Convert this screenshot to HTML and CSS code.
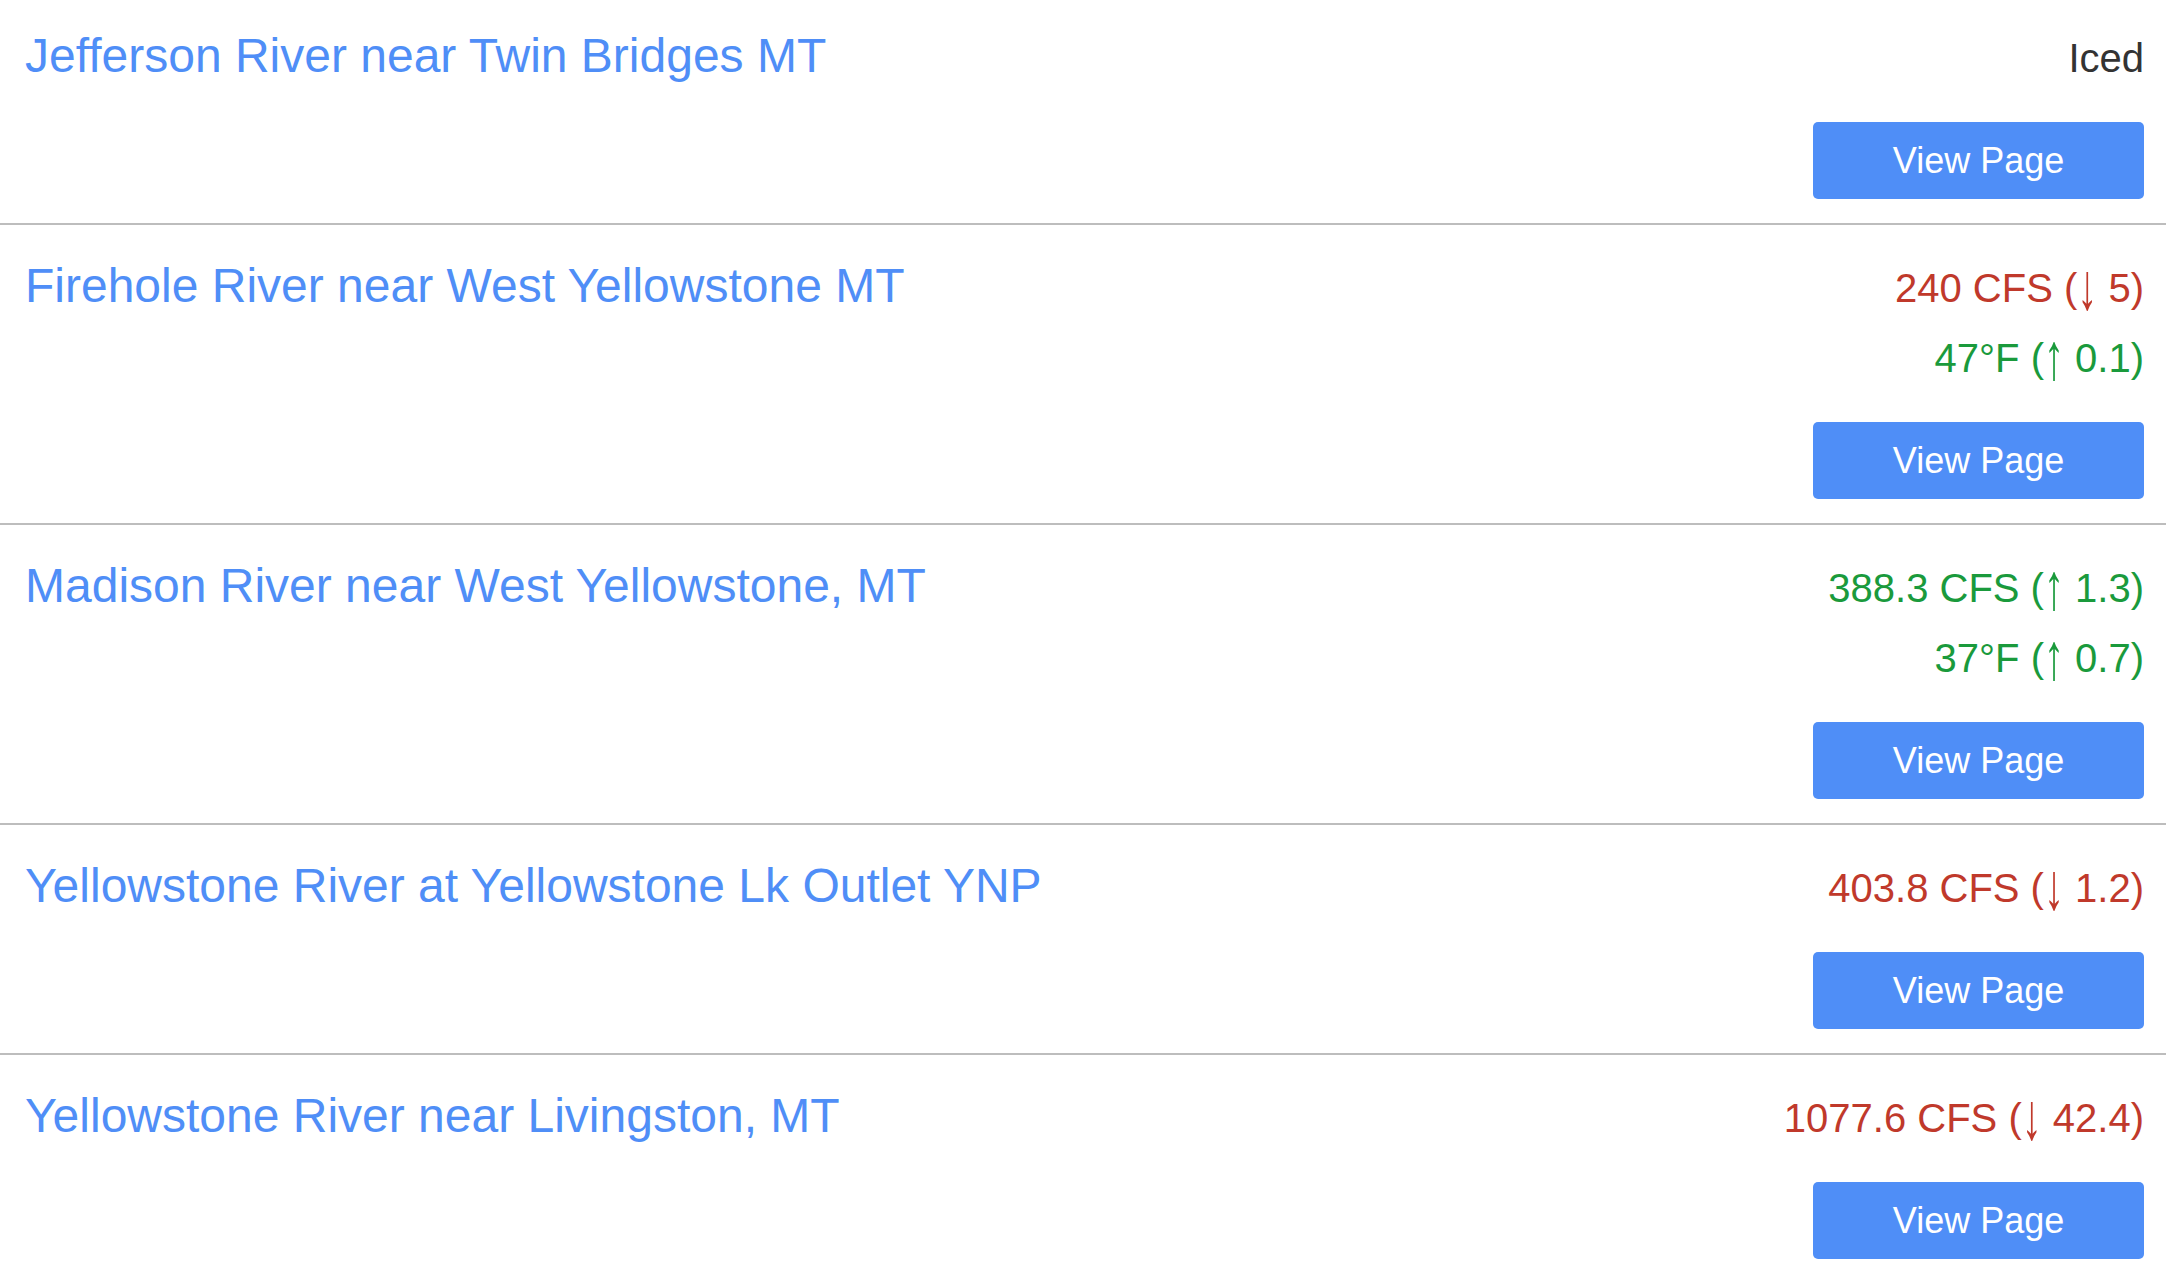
FILE: index.html
```html
<!DOCTYPE html>
<html lang="en">
<head>
<meta charset="utf-8">
<title>Rivers</title>
<link rel="stylesheet" href="styles.css">
</head>
<body>
<ul class="list">
  <li class="row first">
    <a class="title" href="#">Jefferson River near Twin Bridges MT</a>
    <div class="info">
      <div class="line neutral">Iced</div>
      <a class="btn" href="#">View Page</a>
    </div>
  </li>
  <li class="row">
    <a class="title" href="#">Firehole River near West Yellowstone MT</a>
    <div class="info">
      <div class="line down">240 CFS (<span class="arr">↓</span> 5)</div>
      <div class="line up">47°F (<span class="arr">↑</span> 0.1)</div>
      <a class="btn" href="#">View Page</a>
    </div>
  </li>
  <li class="row">
    <a class="title" href="#">Madison River near West Yellowstone, MT</a>
    <div class="info">
      <div class="line up">388.3 CFS (<span class="arr">↑</span> 1.3)</div>
      <div class="line up">37°F (<span class="arr">↑</span> 0.7)</div>
      <a class="btn" href="#">View Page</a>
    </div>
  </li>
  <li class="row">
    <a class="title" href="#">Yellowstone River at Yellowstone Lk Outlet YNP</a>
    <div class="info">
      <div class="line down">403.8 CFS (<span class="arr">↓</span> 1.2)</div>
      <a class="btn" href="#">View Page</a>
    </div>
  </li>
  <li class="row">
    <a class="title" href="#">Yellowstone River near Livingston, MT</a>
    <div class="info">
      <div class="line down">1077.6 CFS (<span class="arr">↓</span> 42.4)</div>
      <a class="btn" href="#">View Page</a>
    </div>
  </li>
</ul>
</body>
</html>
```
FILE: styles.css
```css
html, body {
  margin: 0;
  padding: 0;
  background: #ffffff;
}
body {
  font-family: "Liberation Sans", Helvetica, Arial, sans-serif;
  color: #333333;
}
.list {
  list-style: none;
  margin: 0;
  padding: 0;
}
.row {
  display: flex;
  justify-content: space-between;
  align-items: baseline;
  padding: 28px 22px 24px 25px;
  border-bottom: 2px solid #bdbdbd;
}
.row.first {
  padding-top: 23px;
}
.title {
  font-size: 48px;
  line-height: 64px;
  color: #4f8ef7;
  text-decoration: none;
  white-space: nowrap;
}
.info {
  display: flex;
  flex-direction: column;
  align-items: flex-end;
}
.line {
  font-size: 40px;
  line-height: 70px;
  white-space: nowrap;
}
.arr {
  display: inline-block;
  line-height: 40px;
  transform-origin: 50% 57%;
  transform: scaleY(1.65);
}
.neutral { color: #333333; }
.down { color: #c0392b; }
.up { color: #1a9a3c; }
.btn {
  display: flex;
  align-items: center;
  justify-content: center;
  margin-top: 29px;
  width: 331px;
  height: 77px;
  border-radius: 5px;
  background: #4f8ef7;
  color: #ffffff;
  font-size: 36px;
  text-decoration: none;
}
```
